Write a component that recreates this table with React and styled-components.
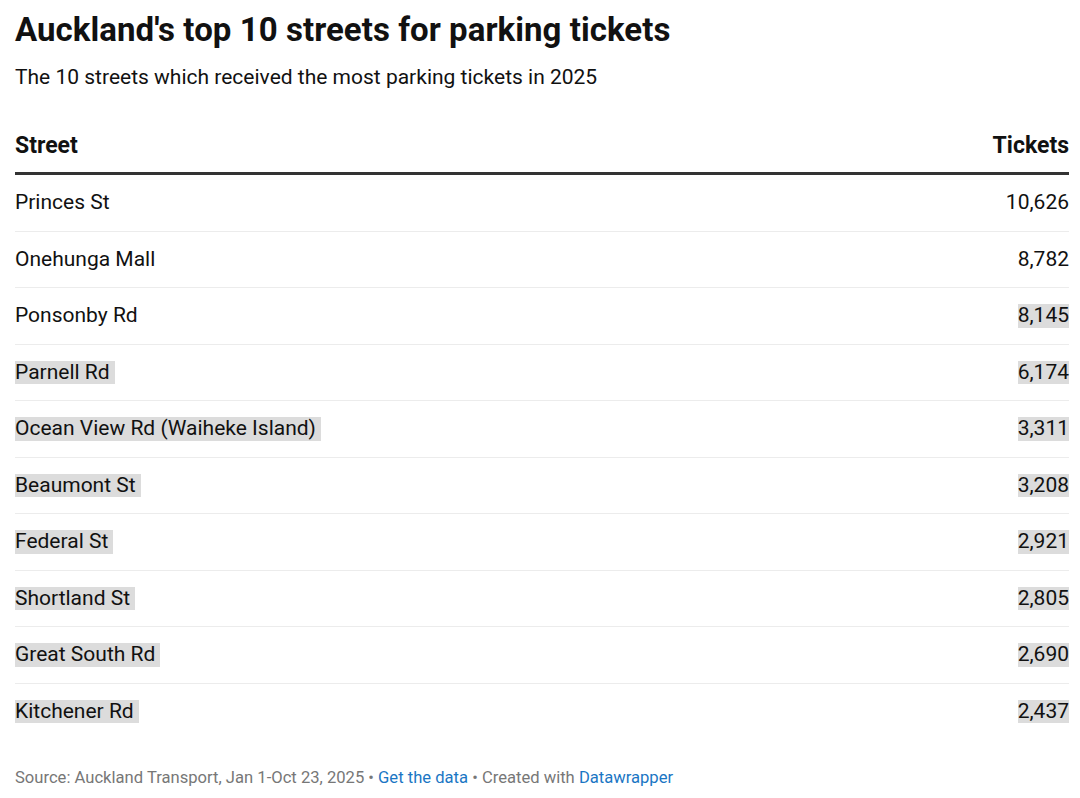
import React from 'react';
import styled, { createGlobalStyle } from 'styled-components';

const GlobalStyle = createGlobalStyle`
  body {
    margin: 0;
    background: #ffffff;
    font-family: Roboto, 'Liberation Sans', sans-serif;
    color: #111111;
  }
`;

const Chart = styled.div`
  width: 1080px;
  box-sizing: border-box;
  padding: 10px 11px 0 15px;
`;

const Title = styled.h1`
  margin: 0;
  font-size: 33px;
  line-height: 40px;
  font-weight: 700;
  letter-spacing: 0.05px;
`;

const Subtitle = styled.p`
  margin: 14px 0 0;
  font-size: 21px;
  line-height: 26px;
  font-weight: 400;
`;

const Table = styled.div`
  margin-top: 44px;
  display: flex;
  flex-direction: column;
`;

const HeaderRow = styled.div`
  display: flex;
  justify-content: space-between;
  align-items: center;
  font-size: 23px;
  font-weight: 700;
  line-height: 24px;
  padding-bottom: 14px;
  border-bottom: 3px solid #333333;
`;

const Row = styled.div`
  display: flex;
  justify-content: space-between;
  align-items: center;
  font-size: 21px;
  line-height: 23.5px;
  padding: 16px 0;
  border-bottom: ${(p) => (p.$last ? 'none' : '1px solid #ececec')};
`;

const Cell = styled.span`
  background: ${(p) => (p.$marked ? '#dcdcdc' : 'transparent')};
  padding-right: ${(p) => (p.$marked && p.$trail ? '5px' : '0')};
`;

const Footer = styled.div`
  margin-top: 29px;
  font-size: 16.6px;
  line-height: 20px;
  color: #777777;
`;

const Link = styled.a`
  color: #1a76c4;
  text-decoration: none;
`;

const rows = [
  ['Princes St', '10,626', false, false],
  ['Onehunga Mall', '8,782', false, false],
  ['Ponsonby Rd', '8,145', false, true],
  ['Parnell Rd', '6,174', true, true],
  ['Ocean View Rd (Waiheke Island)', '3,311', true, true],
  ['Beaumont St', '3,208', true, true],
  ['Federal St', '2,921', true, true],
  ['Shortland St', '2,805', true, true],
  ['Great South Rd', '2,690', true, true],
  ['Kitchener Rd', '2,437', true, true],
];

function App() {
  return (
    <>
      <GlobalStyle />
      <Chart>
        <Title>Auckland's top 10 streets for parking tickets</Title>
        <Subtitle>The 10 streets which received the most parking tickets in 2025</Subtitle>
        <Table>
          <HeaderRow>
            <span>Street</span>
            <span>Tickets</span>
          </HeaderRow>
          {rows.map(([street, count, markStreet, markCount], i) => (
            <Row key={street} $last={i === rows.length - 1}>
              <Cell $marked={markStreet} $trail>{street}</Cell>
              <Cell $marked={markCount}>{count}</Cell>
            </Row>
          ))}
        </Table>
        <Footer>
          Source: Auckland Transport, Jan 1-Oct 23, 2025 • <Link href="#">Get the data</Link> • Created with{' '}
          <Link href="#">Datawrapper</Link>
        </Footer>
      </Chart>
    </>
  );
}

export default App;
